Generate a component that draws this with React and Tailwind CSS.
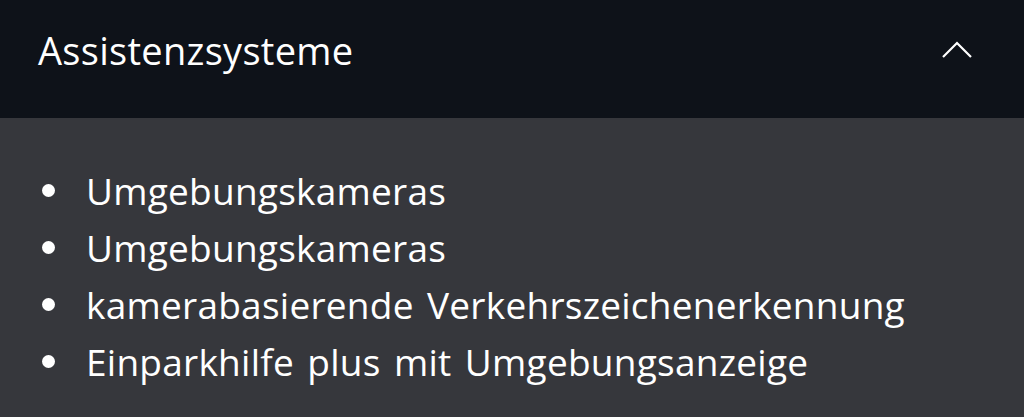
const items = [
  'Umgebungskameras',
  'Umgebungskameras',
  'kamerabasierende Verkehrszeichenerkennung',
  'Einparkhilfe plus mit Umgebungsanzeige',
];

export default function App() {
  return (
    <div className="w-[1024px] h-[417px] bg-[#36373c] text-white font-['Open_Sans',sans-serif] overflow-hidden">
      <div className="h-[118px] bg-[#0e1219] flex items-start justify-between pl-[38px] pr-[51px]">
        <h2 className="mt-[31px] text-[38px] leading-none tracking-[0.3px]">Assistenzsysteme</h2>
        <svg width="32" height="20" viewBox="0 0 32 20" className="mt-[40px]" fill="none" stroke="white" strokeWidth="2.2">
          <path d="M2 17 L16 3 L30 17" />
        </svg>
      </div>
      <ul className="pt-[44px] pl-[42px] flex flex-col">
        {items.map((item, i) => (
          <li key={i} className="flex items-center h-[57px] text-[37px]">
            <span className="w-[13px] h-[13px] rounded-full bg-white mr-[31px] shrink-0" />
            <span className="leading-none tracking-[0.25px] [word-spacing:3.5px]">{item}</span>
          </li>
        ))}
      </ul>
    </div>
  );
}
